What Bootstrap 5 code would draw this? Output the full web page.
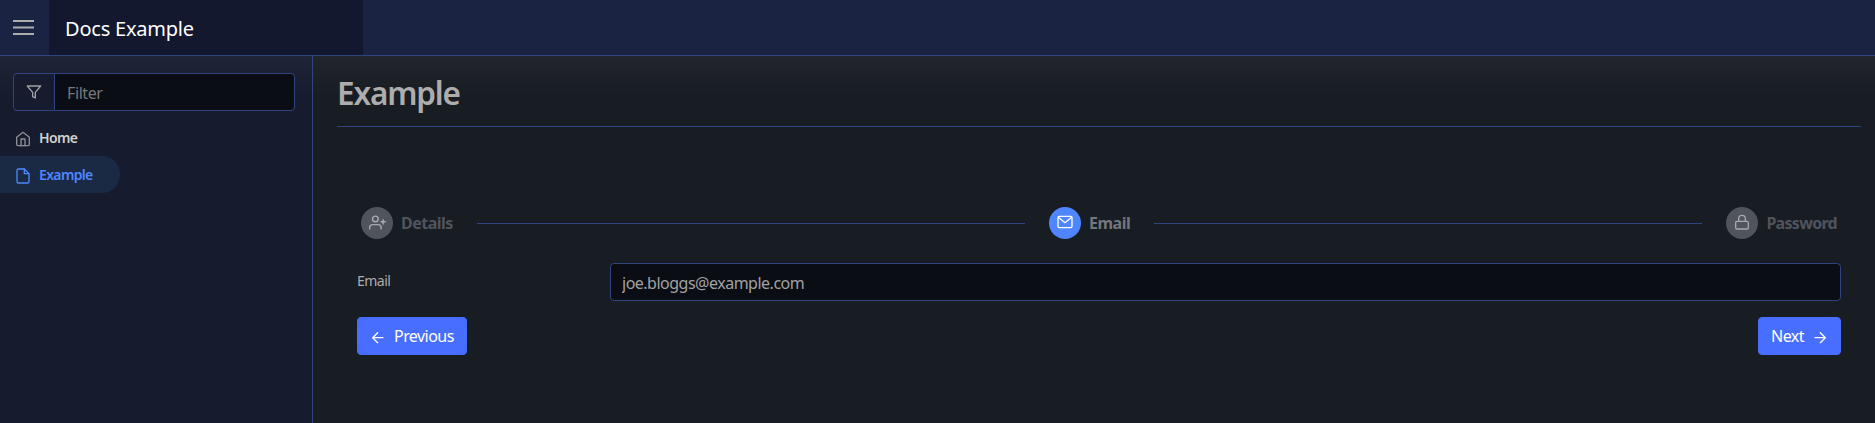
<!DOCTYPE html>
<html lang="en" data-bs-theme="dark">
<head>
<meta charset="utf-8">
<meta name="viewport" content="width=device-width, initial-scale=1">
<title>Docs Example</title>
<link href="https://cdn.jsdelivr.net/npm/bootstrap@5.3.0/dist/css/bootstrap.min.css" rel="stylesheet">
<style>
body{font-family:"Noto Sans","Open Sans",sans-serif;background:#181c23;color:#adadad;height:100vh;overflow:hidden}
svg{fill:none;stroke:currentColor;stroke-width:2;stroke-linecap:round;stroke-linejoin:round;flex:none;display:block}
.topbar{height:56px;background:#1a2342;border-bottom:1px solid #2f4480;flex:none}
.menu-btn{width:49px;padding:0 0 0 13px;color:#c4c6cc;border:0;border-radius:0}
.menu-btn svg{stroke-linecap:butt}
.brand{width:314px;background:#13182f;border-right:1px solid #111629;padding:2px 0 0 16px;font-size:20px;color:#fff;letter-spacing:-.22px}
.side{width:313px;background:#161b2e;border-right:1px solid #2f4480;flex:none}
.shade{background-image:linear-gradient(rgba(255,255,255,.04),rgba(255,255,255,0) 40px)}
.filter{margin:17px 18px 8px 13px;width:282px;height:38px}
.filter .input-group-text{width:42px;padding:0 0 1px 12px;background:#161b2e;border-color:#2f4480;color:#a0a1a5;border-radius:4px}
.form-control,.form-control:focus{height:38px;background:#0a0d14;border:1px solid #2f4480;color:#a1a1a1;border-radius:4px;padding:7px 12px 5px 11px;font-size:16px;letter-spacing:-.5px;box-shadow:none}
.filter .form-control{padding-left:12px}
.form-control::placeholder{color:#75777b;opacity:1;letter-spacing:-.4px}
.side .nav-link{height:37px;padding:0 0 0 15px;font-size:14px;font-weight:600;letter-spacing:-.65px;color:#d0d0d0;border-radius:0 18px 18px 0;gap:8px}
.side .nav-link svg{color:#8e9096;margin-top:2px}
.side .nav-link.active{width:120px;background:#1a2944;color:#4f86ff}
.side .nav-link.active svg{color:#4f86ff}
.main-area{padding:15px 14px 0 24px;min-width:0}
.main-area h1{font-size:31.5px;font-weight:600;line-height:44px;height:55px;color:#adadad;margin:0;letter-spacing:-1.15px}
.rule{height:1px;background:#2f4480}
.wizard{padding:80px 20px 0}
.steps{padding:0 4px;height:32px}
.step{font-size:16px;font-weight:700;color:#50545c;gap:8px;letter-spacing:-.5px}
.step:last-child{letter-spacing:-.7px}
.dot{width:32px;height:32px;border-radius:50%;background:#50545c;color:#a7a9ad;padding-bottom:2px}
.step.on{color:#73767c}
.step.on .dot{background:#4f86ff;color:#fff}
.steps .rule{margin:1px 24px 0}
.field-row{margin-top:24px}
.field-row label{width:253px;font-size:14px;padding-top:7px;letter-spacing:-.5px}
.btn-primary{--bs-btn-bg:#476eff;--bs-btn-border-color:#476eff;height:38px;border-radius:4px;padding:0 12px;font-size:16px;color:#fff;letter-spacing:-.55px}
.btn-primary svg{margin-top:1px}
</style>
</head>
<body class="d-flex flex-column">
<header class="topbar d-flex">
  <button class="menu-btn btn d-flex align-items-center" type="button" aria-label="Menu">
    <svg width="21" height="17" viewBox="0 0 21 17"><path d="M0 2h21M0 8.500h21M0 15h21"/></svg>
  </button>
  <div class="brand d-flex align-items-center">Docs Example</div>
</header>
<div class="d-flex flex-grow-1">
  <aside class="side shade">
    <div class="filter input-group flex-nowrap">
      <span class="input-group-text"><svg width="16" height="16" viewBox="0 0 24 24"><path d="M22 3H2l8 9.500V19l4 2v-8.500z"/></svg></span>
      <input class="form-control" placeholder="Filter" aria-label="Filter">
    </div>
    <nav class="nav flex-column">
      <a class="nav-link d-flex align-items-center" href="#"><svg width="16" height="16" viewBox="0 0 24 24"><path d="M2.500 9.500 12 2l9.500 7.500V20a2 2 0 0 1-2 2h-15a2 2 0 0 1-2-2z"/><path d="M9 22V12h6v10"/></svg><span>Home</span></a>
      <a class="nav-link active d-flex align-items-center" href="#"><svg width="16" height="16" viewBox="0 0 24 24"><path d="M14 1.500H5a2 2 0 0 0-2 2v17a2 2 0 0 0 2 2h14a2 2 0 0 0 2-2v-12z"/><path d="M14 1.500v7h7"/></svg><span>Example</span></a>
    </nav>
  </aside>
  <main class="main-area shade flex-grow-1">
    <h1>Example</h1>
    <div class="rule"></div>
    <div class="wizard">
      <div class="steps d-flex align-items-center">
        <div class="step d-flex align-items-center"><span class="dot d-flex align-items-center justify-content-center"><svg width="17" height="17" viewBox="0 0 24 24"><path d="M17 21v-2a4 4 0 0 0-4-4H5a4 4 0 0 0-4 4v2M20 8v6M23 11h-6"/><circle cx="9" cy="7" r="4"/></svg></span><span>Details</span></div>
        <div class="rule flex-grow-1"></div>
        <div class="step on d-flex align-items-center"><span class="dot d-flex align-items-center justify-content-center"><svg width="16" height="16" viewBox="0 0 24 24"><rect x="1.500" y="3.500" width="21" height="17" rx="2"/><path d="m2 5 10 8L22 5"/></svg></span><span>Email</span></div>
        <div class="rule flex-grow-1"></div>
        <div class="step d-flex align-items-center"><span class="dot d-flex align-items-center justify-content-center"><svg width="16" height="16" viewBox="0 0 24 24"><rect x="2.500" y="11" width="19" height="11.500" rx="2"/><path d="M7 11V7a5 5 0 0 1 10 0v4"/></svg></span><span>Password</span></div>
      </div>
      <div class="field-row d-flex">
        <label for="email">Email</label>
        <input id="email" class="form-control flex-grow-1 w-auto" value="joe.bloggs@example.com">
      </div>
      <div class="d-flex justify-content-between mt-3">
        <button class="btn btn-primary d-flex align-items-center" type="button"><svg class="me-2" width="16" height="16" viewBox="0 0 24 24"><path d="M19.500 13h-15M11.500 5.500 4 13l7.500 7.500"/></svg><span>Previous</span></button>
        <button class="btn btn-primary d-flex align-items-center" type="button"><span>Next</span><svg class="ms-2" width="16" height="16" viewBox="0 0 24 24"><path d="M4.500 13h15M12.500 5.500 20 13l-7.500 7.500"/></svg></button>
      </div>
    </div>
  </main>
</div>
<script src="https://cdn.jsdelivr.net/npm/bootstrap@5.3.0/dist/js/bootstrap.bundle.min.js"></script>
</body>
</html>
